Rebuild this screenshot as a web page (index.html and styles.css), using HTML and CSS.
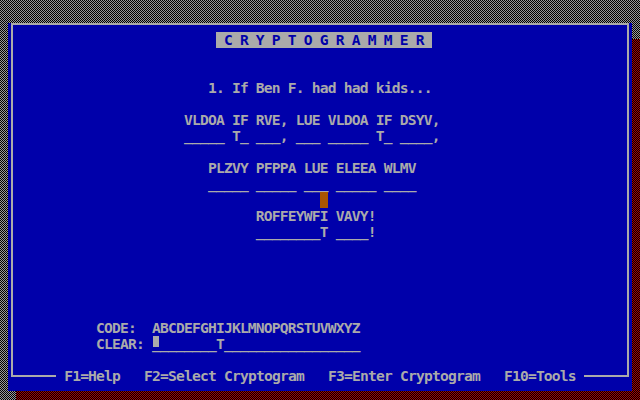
FILE: index.html
```html
<!DOCTYPE html>
<html lang="en">
<head>
<meta charset="utf-8">
<title>Cryptogrammer</title>
<link rel="stylesheet" href="styles.css">
</head>
<body>
<div class="screen">
  <div class="window">
    <div class="box">
      <div class="rows">
        <div class="row">                         <span class="title"> C R Y P T O G R A M M E R </span></div>
        <div class="row"></div>
        <div class="row"></div>
        <div class="row">                        1. If Ben F. had had kids...</div>
        <div class="row"></div>
        <div class="row">                     VLDOA IF RVE, LUE VLDOA IF DSYV,</div>
        <div class="row">                     _____ T_ ___, ___ _____ T_ ____,</div>
        <div class="row"></div>
        <div class="row">                        PLZVY PFPPA LUE ELEEA WLMV</div>
        <div class="row">                        _____ _____ ___ _____ ____</div>
        <div class="row">                                      <span class="cursor"> </span></div>
        <div class="row">                              ROFFEYWFI VAVY!</div>
        <div class="row">                              ________T ____!</div>
        <div class="row"></div>
        <div class="row"></div>
        <div class="row"></div>
        <div class="row"></div>
        <div class="row"></div>
        <div class="row">          CODE:  ABCDEFGHIJKLMNOPQRSTUVWXYZ</div>
        <div class="row">          CLEAR: <span class="caret">_</span>_______T_________________</div>
        <div class="row"></div>
      </div>
      <div class="footer">
        <span class="rule"></span>
        <span class="keys"> F1=Help   F2=Select Cryptogram   F3=Enter Cryptogram   F10=Tools </span>
        <span class="rule"></span>
      </div>
    </div>
  </div>
</div>
</body>
</html>
```

FILE: styles.css
```css
html, body {
  margin: 0;
  padding: 0;
  background: #000;
  overflow: hidden;
}

.screen {
  position: relative;
  z-index: 0;
  box-sizing: border-box;
  width: 640px;
  height: 400px;
  padding: 16px 0 0 8px;
  background-color: #000;
  background-image: conic-gradient(#9a9a9a 25%, #000 0 50%, #9a9a9a 0 75%, #000 0);
  background-size: 2px 2px;
  font-family: "DejaVu Sans Mono", "Liberation Mono", monospace;
  font-weight: bold;
  font-size: 14.617px;
  letter-spacing: -0.8px;
  line-height: 16px;
  color: #aaaaaa;
}

.window {
  position: relative;
  width: 624px;
  height: 368px;
  background: #0000aa;
}

.window::before {
  content: "";
  position: absolute;
  left: 8px;
  top: 16px;
  width: 100%;
  height: 100%;
  z-index: -1;
  background-color: #000;
  background-image: conic-gradient(#aa0000 25%, #000 0 50%, #aa0000 0 75%, #000 0);
  background-size: 2px 2px;
}

.box {
  display: flex;
  flex-direction: column;
  margin: 7px 3px 0;
  border: 2px solid #aaaaaa;
  border-bottom: 0;
}

.rows {
  padding: 7px 0 0 3px;
}

.row {
  height: 16px;
  white-space: pre;
}

.title {
  display: inline-block;
  height: 16px;
  vertical-align: top;
  background: #aaaaaa;
  color: #0000aa;
}

.cursor {
  display: inline-block;
  width: 8px;
  height: 16px;
  vertical-align: top;
  background: #aa5500;
}

.caret {
  background: linear-gradient(#aaaaaa, #aaaaaa) no-repeat 1px 1px / 6px 11px;
}

.footer {
  display: flex;
  height: 16px;
  margin-bottom: -7px;
}

.rule {
  flex: 1;
  height: 2px;
  margin-top: 7px;
  background: #aaaaaa;
}

.keys {
  white-space: pre;
}
```
